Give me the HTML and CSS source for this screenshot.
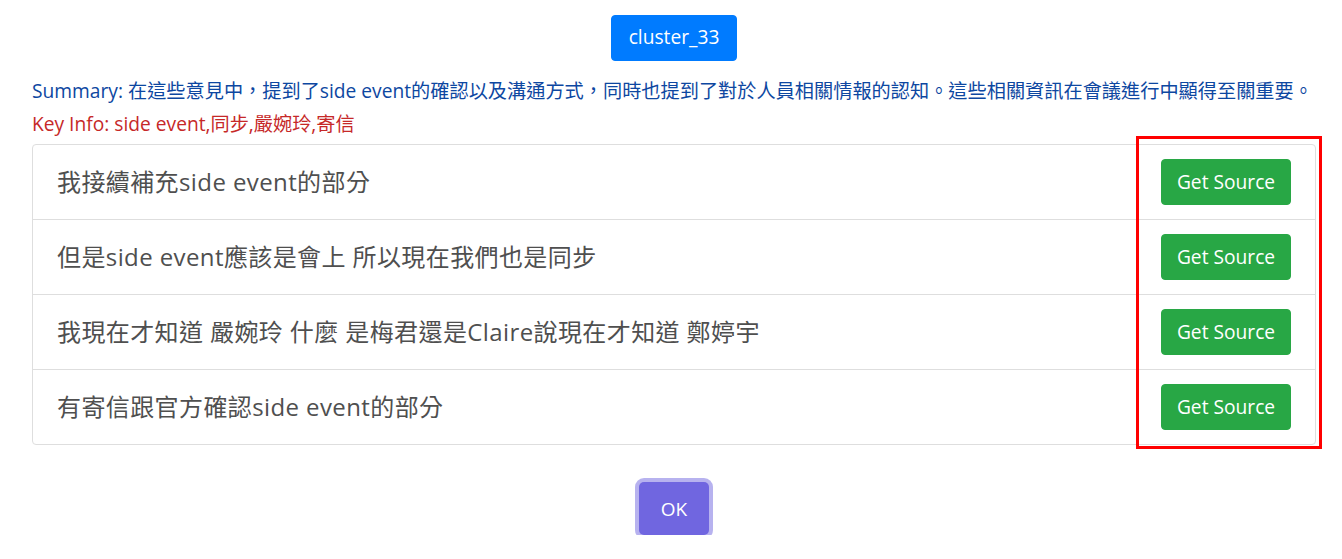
FILE: index.html
```html
<!DOCTYPE html>
<html lang="zh-Hant">
<head>
<meta charset="utf-8">
<title>cluster_33</title>
<link rel="stylesheet" href="styles.css">
</head>
<body>
<div class="page">
  <div class="head">
    <button class="btn btn-blue">cluster_33</button>
  </div>
  <p class="summary"><span class="label">Summary:</span> 在這些意見中，提到了side event的確認以及溝通方式，同時也提到了對於人員相關情報的認知。這些相關資訊在會議進行中顯得至關重要。</p>
  <p class="keyinfo"><span class="label">Key Info:</span> side event,同步,嚴婉玲,寄信</p>
  <div class="list-wrap">
    <ul class="list">
      <li class="row"><span class="row-text">我接續補充side event的部分</span><button class="btn btn-green">Get Source</button></li>
      <li class="row"><span class="row-text">但是side event應該是會上 所以現在我們也是同步</span><button class="btn btn-green">Get Source</button></li>
      <li class="row"><span class="row-text">我現在才知道 嚴婉玲 什麼 是梅君還是Claire說現在才知道 鄭婷宇</span><button class="btn btn-green">Get Source</button></li>
      <li class="row"><span class="row-text">有寄信跟官方確認side event的部分</span><button class="btn btn-green">Get Source</button></li>
    </ul>
    <div class="highlight"></div>
  </div>
  <div class="foot">
    <button class="btn-ok">OK</button>
  </div>
</div>
</body>
</html>
```

FILE: styles.css
```css
html, body {
  margin: 0;
  padding: 0;
  background: #ffffff;
}

body {
  font-family: "Open Sans", "Noto Sans CJK TC", sans-serif;
  font-size: 19.2px;
  line-height: 1.5;
  color: #212529;
}

.page {
  padding: 15px 26px 0 32px;
  display: flex;
  flex-direction: column;
}

.head {
  display: flex;
  justify-content: center;
}

.btn {
  font-family: "Open Sans", "Noto Sans CJK TC", sans-serif;
  font-size: 19.2px;
  line-height: 1.5;
  border: 1px solid transparent;
  border-radius: 4px;
  color: #ffffff;
  padding: 0;
  height: 45.6px;
  box-sizing: border-box;
  white-space: nowrap;
  cursor: pointer;
}

.btn-blue {
  background: #007bff;
  border-color: #007bff;
  width: 126px;
}

.btn-green {
  background: #28a745;
  border-color: #28a745;
  width: 130px;
  flex: none;
}

.summary, .keyinfo {
  margin: 0;
  line-height: 28.8px;
  white-space: nowrap;
}

.summary {
  margin-top: 16px;
  color: #0d47a1;
}

.keyinfo {
  margin-top: 5px;
  color: #c62828;
}

.label {
  font-weight: 500;
}

.list-wrap {
  position: relative;
  margin-top: 5px;
}

.list {
  list-style: none;
  margin: 0;
  padding: 0;
  border: 1px solid #dedede;
  border-radius: 4px;
}

.row {
  display: flex;
  align-items: center;
  justify-content: space-between;
  padding: 14.2px 24px;
  border-top: 1px solid #dedede;
}

.row:first-child {
  border-top: none;
}

.row-text {
  font-size: 24px;
  letter-spacing: 0.4px;
  color: #4f4f4f;
}

.highlight {
  position: absolute;
  left: 1104px;
  top: -8px;
  width: 186px;
  height: 313px;
  box-sizing: border-box;
  border: 3px solid #ff0000;
  pointer-events: none;
}

.foot {
  display: flex;
  justify-content: center;
  margin-top: 37px;
}

.btn-ok {
  width: 70px;
  height: 53px;
  background: #7066e0;
  color: #ffffff;
  border: none;
  border-radius: 5px;
  box-shadow: 0 0 0 4px rgba(112, 102, 224, 0.5);
  font-family: "Open Sans", sans-serif;
  font-size: 19px;
  cursor: pointer;
}
```
